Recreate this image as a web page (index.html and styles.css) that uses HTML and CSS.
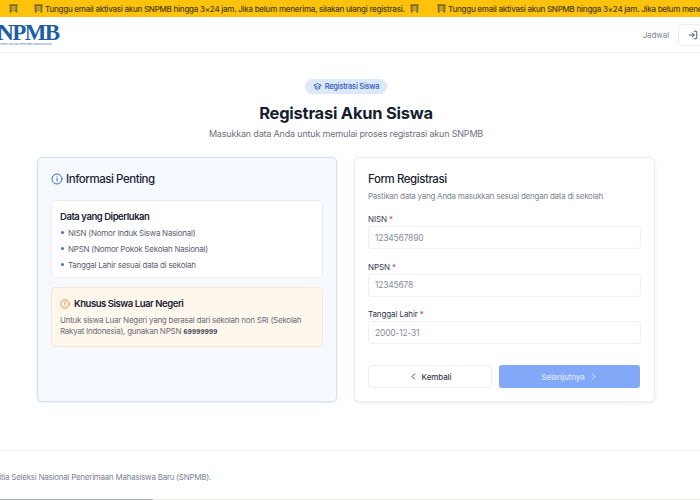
FILE: index.html
```html
<!DOCTYPE html>
<html lang="id">
<head>
    <meta charset="UTF-8">
    <meta name="viewport" content="width=device-width, initial-scale=1.0">
    <title>Registrasi Akun Siswa - SNPMB</title>
    <link rel="stylesheet" href="styles.css">
</head>
<body>
    <svg class="icon-defs" width="0" height="0">
        <symbol id="gate" viewBox="0 0 12 12">
            <rect x="0.500" y="0.500" width="11" height="2.500" fill="#7d5f1e"/>
            <rect x="1" y="3" width="2.500" height="8.500" fill="#6f6c55"/>
            <rect x="8.500" y="3" width="2.500" height="8.500" fill="#6f6c55"/>
            <path d="M3.500 4.500h5v1.500h-5zM3.500 7.500h5v1.500h-5z" fill="#93702a"/>
        </symbol>
    </svg>

    <div class="ticker">
        <div class="ticker-item">
            <svg class="gate"><use href="#gate"/></svg>
        </div>
        <div class="ticker-item">
            <svg class="gate"><use href="#gate"/></svg>
            <span>Tunggu email aktivasi akun SNPMB hingga 3×24 jam. Jika belum menerima, silakan ulangi registrasi.</span>
            <svg class="gate"><use href="#gate"/></svg>
        </div>
        <div class="ticker-item">
            <svg class="gate"><use href="#gate"/></svg>
            <span>Tunggu email aktivasi akun SNPMB hingga 3×24 jam. Jika belum menerima, silakan ulangi registrasi.</span>
            <svg class="gate"><use href="#gate"/></svg>
        </div>
    </div>

    <header class="navbar">
        <div class="logo">
            <span class="logo-word">SNPMB</span>
            <span class="logo-sub">Seleksi Nasional Penerimaan Mahasiswa Baru</span>
        </div>
        <nav class="nav-right">
            <a class="nav-link">Jadwal</a>
            <button class="login-btn" type="button" aria-label="Masuk">
                <svg width="10" height="10" viewBox="0 0 24 24" fill="none" stroke="#3d4654" stroke-width="2.2" stroke-linecap="round" stroke-linejoin="round">
                    <path d="M15 3h4a2 2 0 0 1 2 2v14a2 2 0 0 1-2 2h-4"/>
                    <path d="M10 17l5-5-5-5"/>
                    <path d="M15 12H3"/>
                </svg>
            </button>
        </nav>
    </header>

    <main class="content">
        <div class="intro">
            <span class="pill">
                <svg width="9" height="9" viewBox="0 0 24 24" fill="none" stroke="#2f5bb7" stroke-width="2.4" stroke-linejoin="round">
                    <path d="M2 9l10-5 10 5-10 5z"/>
                    <path d="M6 12v5c3 2.500 9 2.500 12 0v-5"/>
                </svg>
                Registrasi Siswa
            </span>
            <h1>Registrasi Akun Siswa</h1>
            <p>Masukkan data Anda untuk memulai proses registrasi akun SNPMB</p>
        </div>

        <div class="columns">
            <section class="card card-info">
                <h2 class="info-title">
                    <svg width="12" height="12" viewBox="0 0 24 24" fill="none" stroke="#2f6fd0" stroke-width="2" stroke-linecap="round">
                        <circle cx="12" cy="12" r="10"/>
                        <path d="M12 11v5"/>
                        <path d="M12 7.500v.5"/>
                    </svg>
                    Informasi Penting
                </h2>
                <div class="box box-white">
                    <h3>Data yang Diperlukan</h3>
                    <ul>
                        <li>NISN (Nomor Induk Siswa Nasional)</li>
                        <li>NPSN (Nomor Pokok Sekolah Nasional)</li>
                        <li>Tanggal Lahir sesuai data di sekolah</li>
                    </ul>
                </div>
                <div class="box box-warn">
                    <h3>
                        <svg width="10" height="10" viewBox="0 0 24 24" fill="none" stroke="#e58a3c" stroke-width="2.2" stroke-linecap="round">
                            <circle cx="12" cy="12" r="10"/>
                            <path d="M12 7v6"/>
                            <path d="M12 16.500v.5"/>
                        </svg>
                        Khusus Siswa Luar Negeri
                    </h3>
                    <p>Untuk siswa Luar Negeri yang berasal dari sekolah non SRI (Sekolah Rakyat Indonesia), gunakan NPSN <code>69999999</code></p>
                </div>
            </section>

            <section class="card card-form">
                <h2>Form Registrasi</h2>
                <p class="form-note">Pastikan data yang Anda masukkan sesuai dengan data di sekolah</p>
                <form>
                    <label for="nisn">NISN <em>*</em></label>
                    <input type="text" id="nisn" placeholder="1234567890">
                    <label for="npsn">NPSN <em>*</em></label>
                    <input type="text" id="npsn" placeholder="12345678">
                    <label for="lahir">Tanggal Lahir <em>*</em></label>
                    <input type="text" id="lahir" placeholder="2000-12-31">
                    <div class="form-actions">
                        <button type="button" class="btn-back">
                            <svg width="9" height="9" viewBox="0 0 24 24" fill="none" stroke="#374151" stroke-width="2.6" stroke-linecap="round" stroke-linejoin="round"><path d="M15 5l-7 7 7 7"/></svg>
                            Kembali
                        </button>
                        <button type="button" class="btn-next">
                            Selanjutnya
                            <svg width="9" height="9" viewBox="0 0 24 24" fill="none" stroke="#dbe6ff" stroke-width="2.6" stroke-linecap="round" stroke-linejoin="round"><path d="M9 5l7 7-7 7"/></svg>
                        </button>
                    </div>
                </form>
            </section>
        </div>
    </main>

    <footer class="footer">
        <p>© 2025 Panitia Seleksi Nasional Penerimaan Mahasiswa Baru (SNPMB).</p>
    </footer>
    <div class="bottom-strip">
        <span class="strip-grey"></span>
        <span class="strip-green"></span>
    </div>
</body>
</html>
```

FILE: styles.css
```css
* {
    box-sizing: border-box;
}

html, body {
    height: 500px;
    overflow: hidden;
}

body {
    margin: 0;
    font-family: 'Inter', 'Noto Sans', sans-serif;
    background-color: #ffffff;
    color: #1b2333;
    display: flex;
    flex-direction: column;
}

.icon-defs {
    position: absolute;
}

/* top running banner */
.ticker {
    height: 17px;
    flex: none;
    display: flex;
    align-items: center;
    overflow: hidden;
    background-color: #fdc30c;
    color: #4a3c10;
    font-size: 8px;
    font-weight: 500;
    letter-spacing: -0.25px;
    padding-left: 6px;
    white-space: nowrap;
}

.ticker-item {
    display: flex;
    align-items: center;
    gap: 2px;
    flex: none;
}

.ticker-item:first-child {
    width: 28px;
}

.ticker-item + .ticker-item {
    width: 403px;
}

.gate {
    width: 9px;
    height: 9px;
    flex: none;
}

.ticker-item .gate:last-child {
    margin-left: 3px;
}

/* navbar */
.navbar {
    height: 36px;
    flex: none;
    display: flex;
    align-items: center;
    justify-content: space-between;
    border-bottom: 1px solid #f0f1f4;
    margin-right: -16px;
}

.logo {
    display: flex;
    flex-direction: column;
    margin-left: -14px;
    margin-top: 1px;
}

.logo-word {
    font-family: 'Liberation Serif', serif;
    font-weight: 700;
    font-size: 23px;
    line-height: 20px;
    letter-spacing: -1.6px;
    color: #1b5ea6;
}

.logo-sub {
    font-size: 2.4px;
    line-height: 4px;
    color: #5d7fa6;
    margin-left: 14px;
    white-space: nowrap;
}

.nav-right {
    display: flex;
    align-items: center;
    gap: 9px;
}

.nav-link {
    font-size: 8px;
    letter-spacing: -0.1px;
    color: #7c8492;
}

.login-btn {
    width: 38px;
    height: 22px;
    padding: 0 0 0 9px;
    background-color: #ffffff;
    border: 1px solid #eceef2;
    border-radius: 4px;
    display: flex;
    align-items: center;
}

/* main */
.content {
    flex: 1;
    padding: 26px 45px 0 37px;
}

.intro {
    text-align: center;
}

.pill {
    display: inline-flex;
    align-items: center;
    gap: 3px;
    height: 15px;
    padding: 0 8px;
    border-radius: 8px;
    background-color: #dce8fc;
    color: #2f5bb7;
    font-size: 7.5px;
    font-weight: 500;
    letter-spacing: -0.25px;
    vertical-align: top;
}

.intro h1 {
    margin: 4px 0 0;
    font-size: 16.500px;
    line-height: 20px;
    font-weight: 700;
    letter-spacing: -0.25px;
    color: #161d2e;
}

.intro p {
    margin: 4px 0 0;
    font-size: 9px;
    line-height: 14px;
    letter-spacing: -0.18px;
    color: #6b7280;
}

.columns {
    display: grid;
    grid-template-columns: 300px 301px;
    gap: 17px;
    margin-top: 16px;
}

.card {
    height: 245px;
    border-radius: 5px;
    padding: 13px;
    box-shadow: 0 1px 3px rgba(30, 50, 90, 0.1);
}

.card h2 {
    margin: 0;
    font-size: 11.500px;
    line-height: 16px;
    font-weight: 500;
    letter-spacing: -0.45px;
    color: #1b2333;
}

.card-info {
    background-color: #f6f9ff;
    border: 1px solid #d3e0f3;
}

.info-title {
    display: flex;
    align-items: center;
    gap: 3px;
}

.box {
    border-radius: 4px;
    padding: 10px 8px;
}

.box h3 {
    margin: 0;
    font-size: 9.500px;
    line-height: 12px;
    font-weight: 600;
    letter-spacing: -0.45px;
    color: #1b2333;
}

.box-white {
    margin-top: 13px;
    height: 78px;
    background-color: #ffffff;
    border: 1px solid #e9eef6;
}

.box ul {
    list-style: none;
    margin: 2px 0 0;
    padding: 0;
}

.box li {
    font-size: 8px;
    line-height: 16px;
    letter-spacing: -0.25px;
    color: #596273;
    padding-left: 8px;
    position: relative;
}

.box li::before {
    content: "";
    position: absolute;
    left: 1px;
    top: 6px;
    width: 3px;
    height: 3px;
    border-radius: 50%;
    background-color: #2f6fd0;
}

.box-warn {
    margin-top: 9px;
    height: 60px;
    background-color: #fff6ec;
    border: 1px solid #fbe7d0;
}

.box-warn h3 {
    display: flex;
    align-items: center;
    gap: 4px;
}

.box-warn p {
    margin: 5px 0 0;
    font-size: 8px;
    line-height: 11px;
    letter-spacing: -0.25px;
    color: #6b6f78;
}

code {
    font-family: 'Liberation Mono', monospace;
    font-size: 7.500px;
    font-weight: 700;
    color: #3f4652;
}

.card-form {
    background-color: #ffffff;
    border: 1px solid #eceef2;
}

.form-note {
    margin: 3px 0 0;
    font-size: 8px;
    line-height: 12px;
    letter-spacing: -0.25px;
    color: #7c8492;
}

label {
    display: block;
    font-size: 8px;
    line-height: 12px;
    letter-spacing: -0.1px;
    color: #30384a;
    margin: 11px 0 1px;
}

label em {
    font-style: normal;
    color: #d9304f;
}

input {
    display: block;
    width: 100%;
    height: 23px;
    padding: 0 6px;
    margin-bottom: 11.500px;
    border: 1px solid #eef0f3;
    border-radius: 3px;
    font-family: inherit;
    font-size: 8.500px;
    letter-spacing: -0.2px;
    outline: none;
}

input::placeholder {
    color: #868d99;
}

.form-actions {
    display: grid;
    grid-template-columns: 124px 141px;
    gap: 7px;
    margin-top: 21px;
}

.form-actions button {
    height: 23px;
    border-radius: 3px;
    font-family: inherit;
    font-size: 8px;
    font-weight: 500;
    letter-spacing: -0.1px;
    display: flex;
    align-items: center;
    justify-content: center;
    gap: 4px;
}

.btn-back {
    background-color: #ffffff;
    border: 1px solid #eef0f3;
    color: #374151;
}

.btn-next {
    background-color: #84a8f8;
    border: none;
    color: #dbe6ff;
}

/* footer */
.footer {
    height: 49px;
    flex: none;
    border-top: 1px solid #eff0f3;
    display: flex;
    align-items: center;
    margin-left: -44px;
}

.footer p {
    margin: 3px 0 0;
    font-size: 8px;
    letter-spacing: -0.25px;
    color: #7c8492;
    white-space: nowrap;
}

.bottom-strip {
    height: 1px;
    flex: none;
    display: flex;
}

.strip-grey {
    width: 153px;
    background-color: #a9b3ad;
}

.strip-green {
    flex: 1;
    background-color: #e6efe0;
}
```
